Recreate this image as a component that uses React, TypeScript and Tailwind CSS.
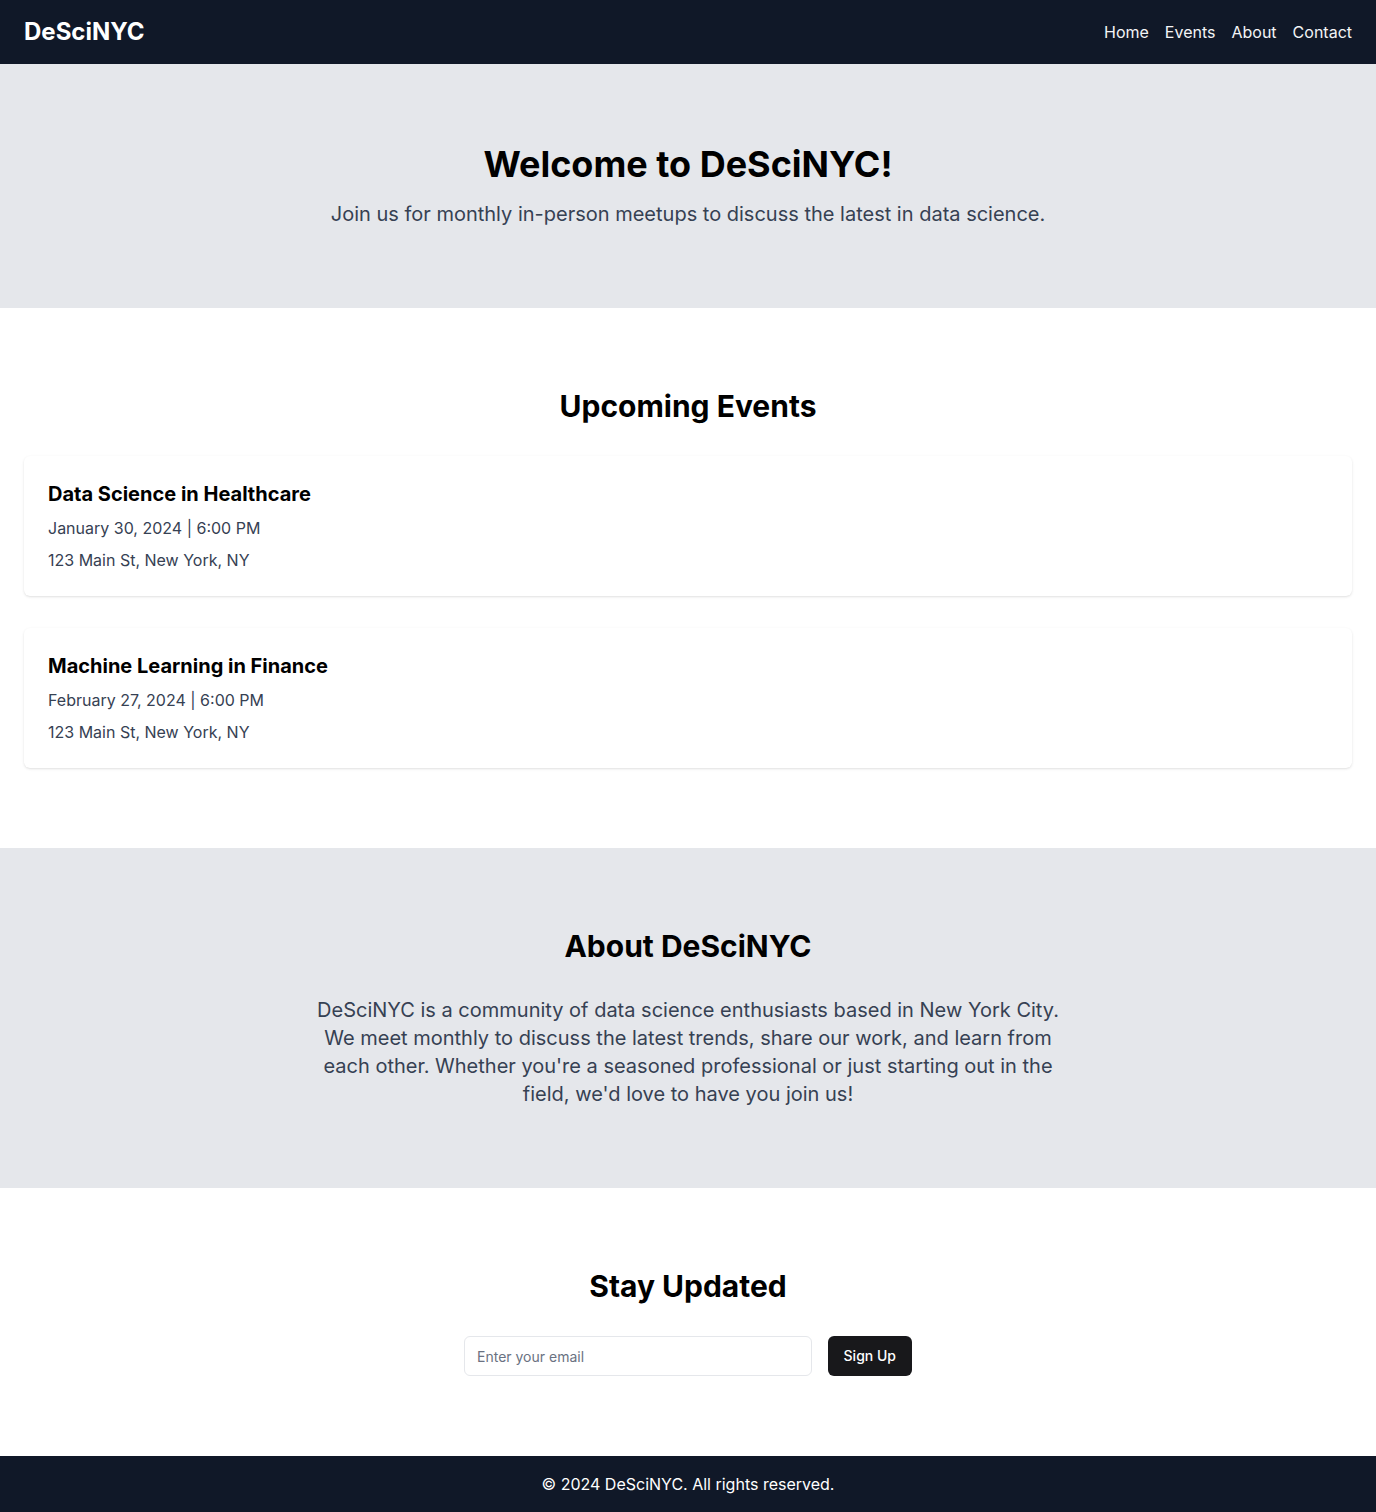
export default function App() {
  const events = [
    {
      title: "Data Science in Healthcare",
      date: "January 30, 2024 | 6:00 PM",
      place: "123 Main St, New York, NY",
    },
    {
      title: "Machine Learning in Finance",
      date: "February 27, 2024 | 6:00 PM",
      place: "123 Main St, New York, NY",
    },
  ];

  return (
    <div className="min-h-screen bg-white font-['Inter',sans-serif] text-black">
      {/* Header */}
      <header className="h-16 bg-gray-900 px-6 flex items-center justify-between">
        <span className="text-2xl font-bold text-white">DeSciNYC</span>
        <nav className="flex gap-4 text-base text-gray-100">
          <a href="#">Home</a>
          <a href="#">Events</a>
          <a href="#">About</a>
          <a href="#">Contact</a>
        </nav>
      </header>

      {/* Hero */}
      <section className="bg-gray-200 py-20 text-center">
        <h1 className="text-4xl font-bold mb-4">Welcome to DeSciNYC!</h1>
        <p className="text-xl text-gray-700">
          Join us for monthly in-person meetups to discuss the latest in data science.
        </p>
      </section>

      {/* Events */}
      <section className="py-20 px-6">
        <h2 className="text-3xl font-bold text-center mb-8">Upcoming Events</h2>
        <div className="flex flex-col gap-8">
          {events.map((e) => (
            <div key={e.title} className="bg-white rounded-md shadow p-6">
              <h3 className="text-xl font-bold mb-2">{e.title}</h3>
              <p className="text-base text-gray-700 mb-2">{e.date}</p>
              <p className="text-base text-gray-700">{e.place}</p>
            </div>
          ))}
        </div>
      </section>

      {/* About */}
      <section className="bg-gray-200 py-20 px-6 text-center">
        <h2 className="text-3xl font-bold mb-8">About DeSciNYC</h2>
        <p className="max-w-3xl mx-auto text-xl text-gray-700">
          DeSciNYC is a community of data science enthusiasts based in New York City. We meet
          monthly to discuss the latest trends, share our work, and learn from each other.
          Whether you're a seasoned professional or just starting out in the field, we'd love
          to have you join us!
        </p>
      </section>

      {/* Newsletter */}
      <section className="py-20 px-6">
        <h2 className="text-3xl font-bold text-center mb-8">Stay Updated</h2>
        <form className="max-w-md mx-auto flex gap-4" onSubmit={(ev) => ev.preventDefault()}>
          <input
            type="email"
            placeholder="Enter your email"
            className="flex-1 h-10 rounded-md border border-gray-200 px-3 text-sm placeholder:text-gray-500 outline-none"
          />
          <button className="h-10 rounded-md bg-[#18181b] px-4 text-sm font-medium text-white">
            Sign Up
          </button>
        </form>
      </section>

      {/* Footer */}
      <footer className="bg-gray-900 py-4 text-center text-base text-white">
        © 2024 DeSciNYC. All rights reserved.
      </footer>
    </div>
  );
}
